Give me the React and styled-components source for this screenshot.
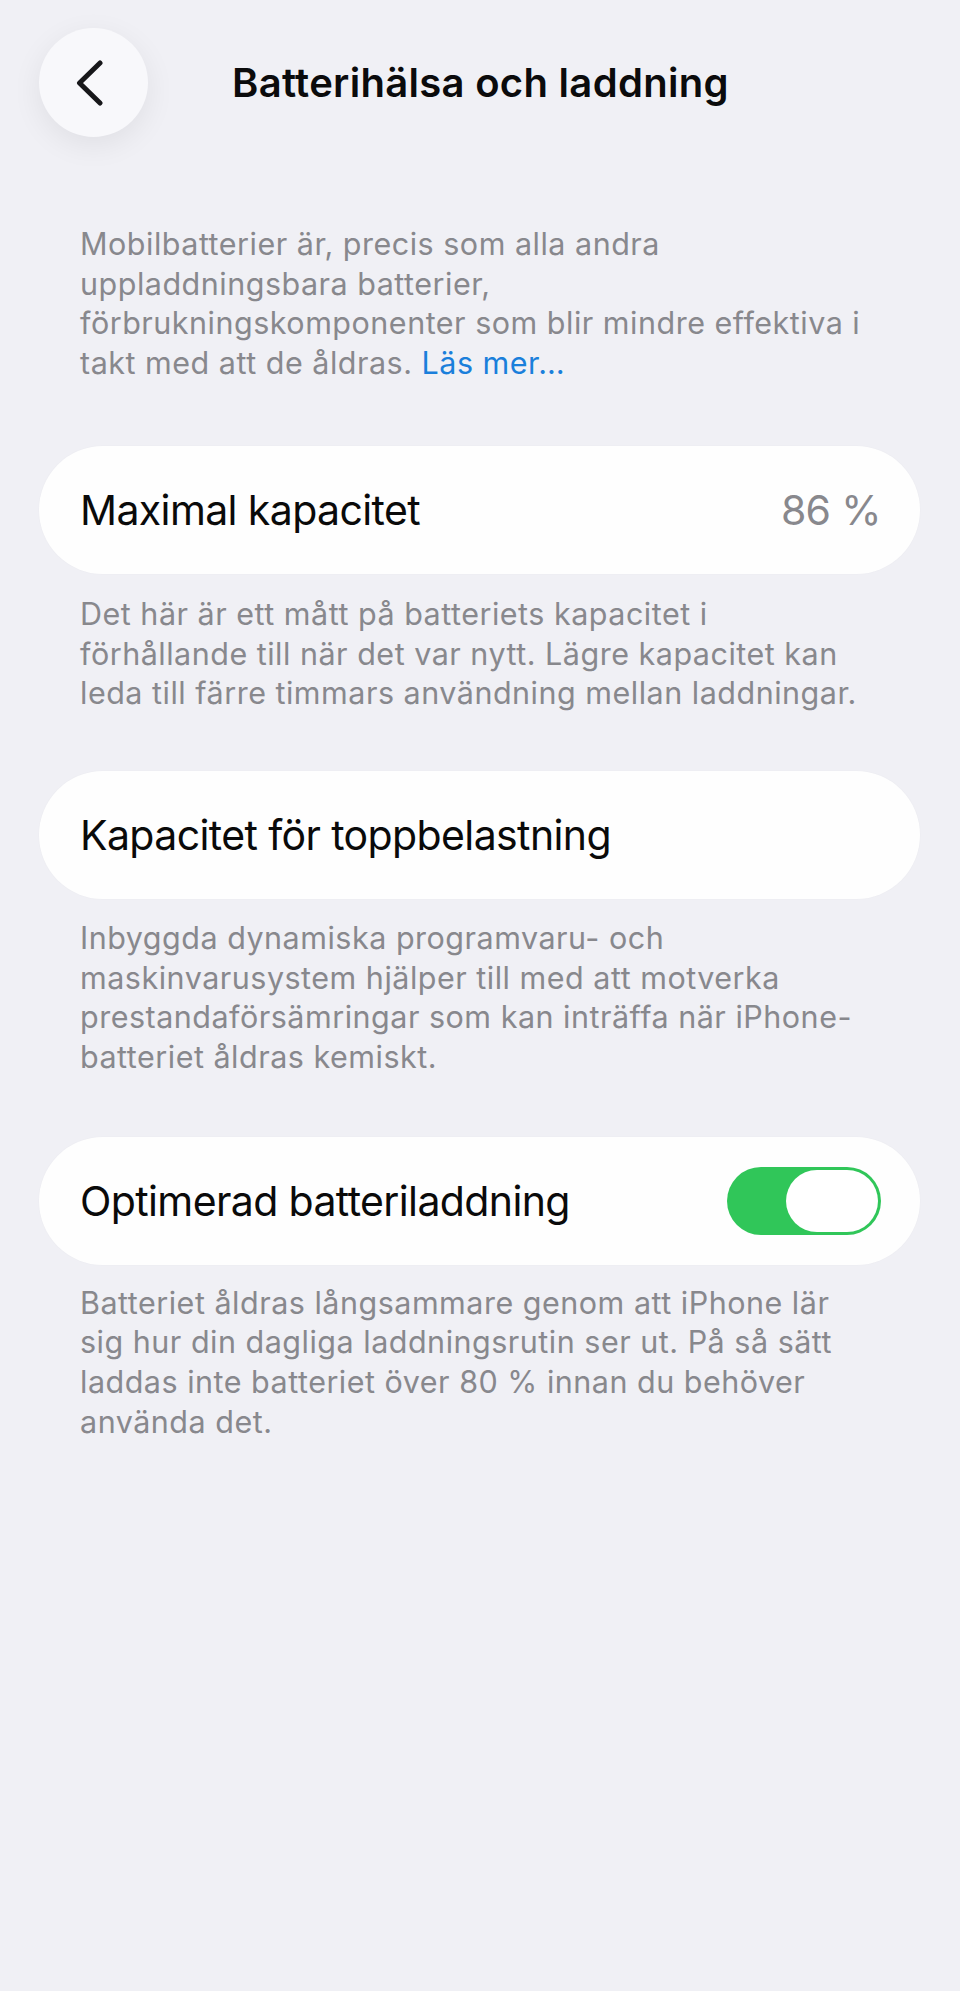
import React from 'react';
import styled, { createGlobalStyle } from 'styled-components';

const Global = createGlobalStyle`
  html, body {
    margin: 0;
    padding: 0;
    background: #f0f0f5;
  }
  body {
    font-family: Inter, "Noto Sans", sans-serif;
    -webkit-font-smoothing: antialiased;
  }
`;

const Page = styled.div`
  min-height: 1991px;
  box-sizing: border-box;
  padding: 28px 40px 0 39px;
  display: flex;
  flex-direction: column;
`;

const Header = styled.header`
  display: flex;
  align-items: center;
  height: 109px;
`;

const BackButton = styled.button`
  width: 109px;
  height: 109px;
  flex-shrink: 0;
  border: none;
  border-radius: 50%;
  padding: 0;
  background: #f8f8fb;
  box-shadow: 0 8px 30px rgba(0, 0, 0, 0.07);
  display: flex;
  align-items: center;
  justify-content: center;
  svg {
    margin-right: 7px;
  }
`;

const Title = styled.h1`
  margin: 0 0 0 84px;
  font-size: 40px;
  font-weight: 600;
  color: #0b0b0c;
  letter-spacing: 0.3px;
`;

const Note = styled.p`
  margin: ${(p) => p.$top || 0}px 0 0;
  padding: 0 41px;
  font-size: 30.5px;
  line-height: 39.7px;
  color: #88888d;
  letter-spacing: 0.5px;
`;

const Link = styled.a`
  color: #1a7fdb;
  text-decoration: none;
`;

const Section = styled.section`
  margin-top: ${(p) => p.$top}px;
  display: flex;
  flex-direction: column;
`;

const Card = styled.div`
  height: 128px;
  box-sizing: border-box;
  border-radius: 64px;
  background: #fefefe;
  box-shadow: 0 0 2px rgba(0, 0, 0, 0.03);
  padding: 0 39px 0 41px;
  display: flex;
  align-items: center;
  justify-content: space-between;
`;

const Label = styled.span`
  font-size: 41px;
  color: #0a0a0a;
  letter-spacing: -0.015em;
`;

const Value = styled.span`
  font-size: 41px;
  color: #88888d;
  letter-spacing: -0.015em;
`;

const Toggle = styled.div`
  width: 154px;
  height: 68px;
  box-sizing: border-box;
  padding: 3px;
  border-radius: 34px;
  background: #30c659;
  display: flex;
  justify-content: ${(p) => (p.$on ? 'flex-end' : 'flex-start')};
`;

const Knob = styled.div`
  width: 92px;
  height: 62px;
  border-radius: 31px;
  background: #ffffff;
`;

const Chevron = () => (
  <svg width="28" height="48" viewBox="0 0 28 48" fill="none">
    <path
      d="M24 4 L3.5 24 L24 44"
      stroke="#17171a"
      strokeWidth="5"
      strokeLinecap="round"
      strokeLinejoin="round"
    />
  </svg>
);

const lines = (arr) =>
  arr.map((l, i) => (
    <React.Fragment key={i}>
      {l}
      {i < arr.length - 1 && <br />}
    </React.Fragment>
  ));

export default function App() {
  return (
    <>
      <Global />
      <Page>
        <Header>
          <BackButton aria-label="Tillbaka">
            <Chevron />
          </BackButton>
          <Title>Batterihälsa och laddning</Title>
        </Header>

        <Note $top={87}>
          Mobilbatterier är, precis som alla andra
          <br />
          uppladdningsbara batterier,
          <br />
          förbrukningskomponenter som blir mindre effektiva i
          <br />
          takt med att de åldras. <Link href="#">Läs mer…</Link>
        </Note>

        <Section $top={63}>
          <Card>
            <Label>Maximal kapacitet</Label>
            <Value>86 %</Value>
          </Card>
          <Note $top={20}>
            {lines([
              'Det här är ett mått på batteriets kapacitet i',
              'förhållande till när det var nytt. Lägre kapacitet kan',
              'leda till färre timmars användning mellan laddningar.',
            ])}
          </Note>
        </Section>

        <Section $top={58}>
          <Card>
            <Label>Kapacitet för toppbelastning</Label>
          </Card>
          <Note $top={19}>
            {lines([
              'Inbyggda dynamiska programvaru- och',
              'maskinvarusystem hjälper till med att motverka',
              'prestandaförsämringar som kan inträffa när iPhone-',
              'batteriet åldras kemiskt.',
            ])}
          </Note>
        </Section>

        <Section $top={60}>
          <Card>
            <Label>Optimerad batteriladdning</Label>
            <Toggle $on>
              <Knob />
            </Toggle>
          </Card>
          <Note $top={18}>
            {lines([
              'Batteriet åldras långsammare genom att iPhone lär',
              'sig hur din dagliga laddningsrutin ser ut. På så sätt',
              'laddas inte batteriet över 80 % innan du behöver',
              'använda det.',
            ])}
          </Note>
        </Section>
      </Page>
    </>
  );
}
